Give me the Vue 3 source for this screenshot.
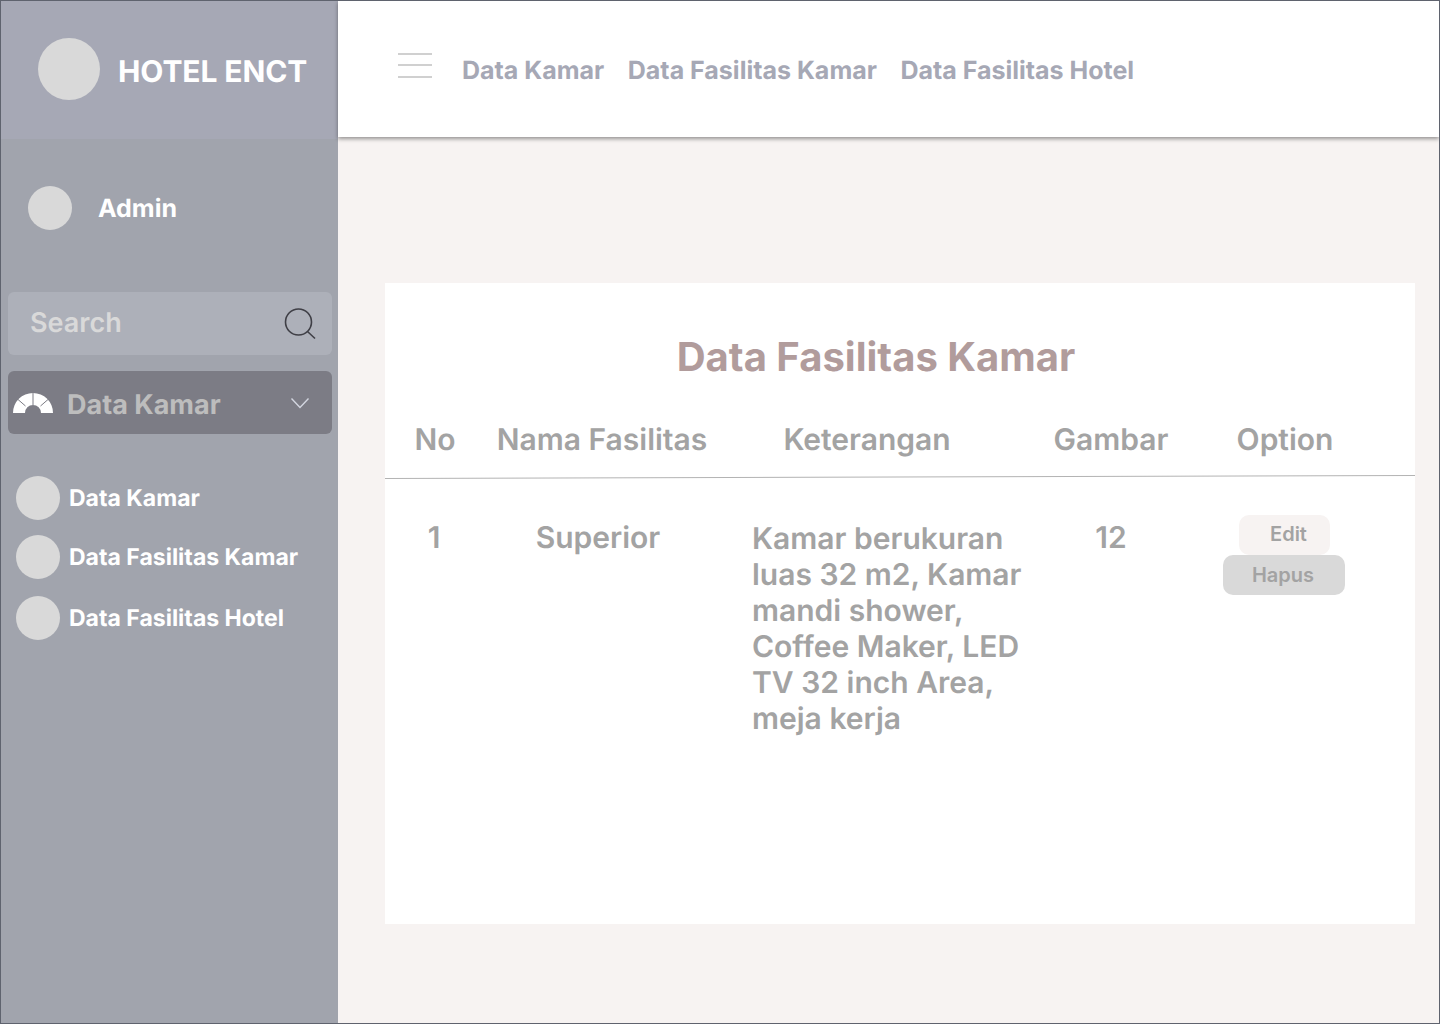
<template>
  <div class="page">
    <aside class="sidebar">
      <div class="brand">
        <div class="brand-logo"></div>
        <span class="brand-name">HOTEL ENCT</span>
      </div>

      <div class="user">
        <div class="user-avatar"></div>
        <span class="user-name">Admin</span>
      </div>

      <div class="search">
        <span class="search-text">Search</span>
        <svg class="search-icon" width="34" height="34" viewBox="0 0 34 34" fill="none">
          <circle cx="15.5" cy="15" r="13" stroke="#3f3f46" stroke-width="1.6" />
          <path d="M24.5 24.5 L32 31.5" stroke="#3f3f46" stroke-width="1.6" />
        </svg>
      </div>

      <div class="dropdown">
        <svg class="gauge" width="40" height="20" viewBox="0 0 40 20">
          <path d="M0 20 A20 20 0 0 1 40 20 H28 A8 8 0 0 0 12 20 Z" fill="#fff" />
          <path d="M5 6.5 L12.5 13 M20 0 V12 M35 6.5 L27.5 13" stroke="#7c7c85" stroke-width="1" />
        </svg>
        <span class="dropdown-text">Data Kamar</span>
        <svg class="chevron" width="20" height="12" viewBox="0 0 20 12" fill="none">
          <path d="M1.5 1.5 L10 10.5 L18.5 1.5" stroke="#d3d6e0" stroke-width="1.4" />
        </svg>
      </div>

      <nav class="side-nav">
        <a v-for="item in menu" :key="item" class="side-item">
          <span class="side-dot"></span>
          <span>{{ item }}</span>
        </a>
      </nav>
    </aside>

    <div class="content">
      <header class="topbar">
        <div class="burger">
          <span></span>
          <span></span>
          <span></span>
        </div>
        <a v-for="item in menu" :key="item" class="top-link">{{ item }}</a>
      </header>

      <main class="main">
        <section class="card">
          <h1 class="card-title">Data Fasilitas Kamar</h1>

          <div class="row head-row">
            <div>No</div>
            <div>Nama Fasilitas</div>
            <div>Keterangan</div>
            <div>Gambar</div>
            <div>Option</div>
          </div>

          <svg class="divider" width="1030" height="4" viewBox="0 0 1030 4">
            <line x1="0" y1="3.5" x2="1030" y2="0.5" stroke="#b3b3b3" stroke-width="1" />
          </svg>

          <div v-for="f in fasilitas" :key="f.no" class="row body-row">
            <div class="cell-no">{{ f.no }}</div>
            <div class="cell-name">{{ f.nama }}</div>
            <div class="cell-desc">{{ f.keterangan }}</div>
            <div>{{ f.gambar }}</div>
            <div class="cell-actions">
              <button class="btn btn-edit">Edit</button>
              <button class="btn btn-hapus">Hapus</button>
            </div>
          </div>
        </section>
      </main>
    </div>
  </div>
</template>

<script setup>
const menu = ['Data Kamar', 'Data Fasilitas Kamar', 'Data Fasilitas Hotel'];

const fasilitas = [
  {
    no: 1,
    nama: 'Superior',
    keterangan: 'Kamar berukuran luas 32 m2, Kamar mandi shower, Coffee Maker, LED TV 32 inch Area, meja kerja',
    gambar: 12,
  },
];
</script>

<style scoped>
.page {
  box-sizing: border-box;
  display: flex;
  width: 1440px;
  height: 1024px;
  overflow: hidden;
  border: 1px solid #5f636e;
  background-color: #f7f3f2;
  font-family: Inter, "Liberation Sans", sans-serif;
  text-rendering: geometricPrecision;
}

.sidebar {
  flex: 0 0 337px;
  display: flex;
  flex-direction: column;
  background-color: #a1a4ad;
}

.brand {
  flex: 0 0 138px;
  display: flex;
  align-items: center;
  gap: 18px;
  padding-left: 37px;
  box-sizing: border-box;
  background-color: #a6a8b5;
}

.brand-logo {
  width: 62px;
  height: 62px;
  margin-top: -2px;
  border-radius: 50%;
  background-color: #d9d9d9;
}

.brand-name {
  margin-top: 4px;
  color: #fff;
  font-size: 30px;
  font-weight: 700;
  letter-spacing: -0.1px;
}

.user {
  display: flex;
  align-items: center;
  gap: 26px;
  margin-top: 47px;
  padding-left: 27px;
}

.user-avatar {
  width: 44px;
  height: 44px;
  border-radius: 50%;
  background-color: #d9d9d9;
}

.user-name {
  margin-top: 2px;
  color: #fff;
  font-size: 25px;
  font-weight: 700;
}

.search {
  display: flex;
  align-items: center;
  justify-content: space-between;
  height: 63px;
  margin: 62px 6px 0 7px;
  padding: 0 15px 0 22px;
  border-radius: 6px;
  background-color: #adb0b9;
}

.search-text {
  margin-top: -2px;
  color: #d9d9d9;
  font-size: 27px;
  font-weight: 600;
}

.search-icon {
  margin-top: 1px;
}

.dropdown {
  display: flex;
  align-items: center;
  height: 63px;
  margin: 16px 6px 0 7px;
  padding: 0 22px 0 5px;
  border-radius: 6px;
  background-color: #7c7c85;
}

.gauge {
  flex: none;
  margin-right: 14px;
}

.dropdown-text {
  flex: 1;
  margin-top: 3px;
  color: #bdbdbd;
  font-size: 27px;
  font-weight: 700;
}

.side-nav {
  display: flex;
  flex-direction: column;
  gap: 15px;
  margin-top: 42px;
  padding-left: 15px;
}

.side-item {
  display: flex;
  align-items: center;
  gap: 9px;
  color: #fff;
  font-size: 23px;
  font-weight: 700;
}

.side-item:last-child {
  margin-top: 2px;
}

.side-dot {
  width: 44px;
  height: 44px;
  border-radius: 50%;
  background-color: #d9d9d9;
}

.content {
  flex: 1;
  display: flex;
  flex-direction: column;
  min-width: 0;
}

.topbar {
  flex: 0 0 136px;
  display: flex;
  align-items: center;
  gap: 23.5px;
  padding-left: 60px;
  background-color: #fff;
  box-shadow: 0 2px 4px rgba(0, 0, 0, 0.4);
}

.burger {
  display: flex;
  flex-direction: column;
  gap: 9.5px;
  width: 34px;
  margin-right: 6.5px;
  margin-top: -8px;
}

.burger span {
  height: 2px;
  background-color: #d0d0d0;
}

.top-link {
  margin-top: 4px;
  color: #a6a8b5;
  font-size: 25px;
  font-weight: 700;
}

.main {
  flex: 1;
  padding: 146px 24px 0 47px;
}

.card {
  height: 641px;
  background-color: #fff;
}

.card-title {
  margin: 0;
  padding: 50px 48px 0 0;
  text-align: center;
  color: #b19c9c;
  font-size: 40px;
  font-weight: 700;
  line-height: 48px;
}

.row {
  display: grid;
  grid-template-columns: 100px 234px 296px 192px 156px;
  color: #a3a3a3;
  font-size: 30px;
  font-weight: 600;
  line-height: 36px;
  text-align: center;
}

.head-row {
  margin-top: 41px;
}

.divider {
  display: block;
  margin-top: 17px;
}

.body-row {
  margin-top: 41px;
}

.cell-no {
  padding-right: 2px;
}

.cell-name {
  padding-right: 8px;
}

.cell-desc {
  margin-top: 1px;
  margin-right: -20px;
  padding-left: 33px;
  text-align: left;
}

.cell-actions {
  display: flex;
  flex-direction: column;
  align-items: center;
  margin-top: -5px;
  padding-right: 2px;
}

.btn {
  height: 40px;
  border: none;
  border-radius: 10px;
  padding: 0;
  color: #a3a3a3;
  font-family: inherit;
  font-size: 20px;
  font-weight: 600;
}

.btn-edit {
  width: 91px;
  padding-left: 8px;
  padding-bottom: 2px;
  margin-left: 1px;
  background-color: #f7f3f2;
}

.btn-hapus {
  width: 122px;
  padding-right: 2px;
  background-color: #d9d9d9;
}
</style>

<style>
body {
  margin: 0;
}
</style>
